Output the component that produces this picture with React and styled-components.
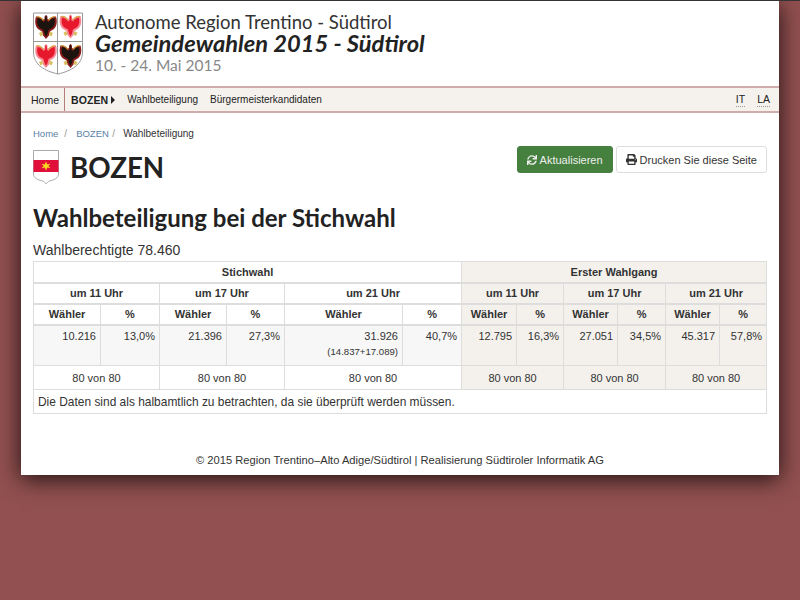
import React from "react";
import styled, { createGlobalStyle } from "styled-components";
import { FaSync, FaPrint } from "react-icons/fa";

const Global = createGlobalStyle`
  html, body {
    margin: 0;
    padding: 0;
  }
  body {
    background: #925050;
    min-height: 600px;
    border-top: 1px solid #333;
    box-sizing: border-box;
    font-family: "Liberation Sans", Arial, sans-serif;
    font-size: 12px;
    color: #333;
  }
`;

const Page = styled.div`
  width: 758px;
  height: 474px;
  margin: 0 auto;
  background: #fff;
  box-shadow: 0 4px 22px rgba(0, 0, 0, 0.8);
  display: flex;
  flex-direction: column;
`;

const Header = styled.header`
  height: 85px;
  padding: 11px 0 0 12px;
  box-sizing: border-box;
  display: flex;
  gap: 12px;
`;

const Titles = styled.div`
  font-family: Lato, sans-serif;
  display: flex;
  flex-direction: column;
`;

const Region = styled.div`
  font-size: 18.5px;
  line-height: 20px;
  color: #333;
`;

const Election = styled.div`
  font-size: 23.7px;
  line-height: 23px;
  font-weight: 700;
  font-style: italic;
  color: #222;
`;

const Dates = styled.div`
  font-size: 15.5px;
  line-height: 21px;
  color: #888;
`;

const Nav = styled.nav`
  height: 27px;
  box-sizing: border-box;
  background: #f5f2ee;
  border-top: 2px solid #cfabab;
  border-bottom: 2px solid #cfabab;
  display: flex;
  align-items: stretch;
  font-size: 10px;
  color: #222;
`;

const NavItem = styled.div`
  display: flex;
  align-items: center;
  padding: 0 6px;
  ${(p) => p.$first && "padding: 0 5px 0 10px; font-size: 10.5px; border-right: 1px solid #b57c7c;"}
  ${(p) => p.$bold && "font-weight: 700; font-size: 10.5px; letter-spacing: 0.1px;"}
`;

const Caret = styled.span`
  width: 0;
  height: 0;
  margin-left: 3px;
  border-left: 4px solid #222;
  border-top: 4px solid transparent;
  border-bottom: 4px solid transparent;
`;

const Langs = styled.div`
  margin-left: auto;
  display: flex;
  align-items: center;
  gap: 12px;
  padding-right: 9px;
  font-size: 10.5px;
`;

const Lang = styled.abbr`
  border-bottom: 1px dotted #999;
  line-height: 13px;
`;

const Main = styled.main`
  padding: 0 12px;
  flex: 1;
  display: flex;
  flex-direction: column;
`;

const Crumbs = styled.div`
  display: flex;
  align-items: baseline;
  margin-top: 14px;
  font-size: 10px;
  line-height: 14px;
  color: #333;
`;

const CrumbLink = styled.span`
  color: #5b7fa6;
  font-size: 9.5px;
`;

const Sep = styled.span`
  color: #999;
  margin: 0 ${(p) => p.$right}px 0 ${(p) => p.$left}px;
`;

const TitleRow = styled.div`
  display: flex;
  justify-content: space-between;
  align-items: flex-start;
  margin-top: 5px;
`;

const City = styled.div`
  display: flex;
  align-items: center;
  gap: 11px;
  padding-top: 4px;
`;

const CityName = styled.h1`
  margin: 0;
  font-family: Lato, sans-serif;
  font-size: 27.7px;
  line-height: 34px;
  font-weight: 700;
  color: #222;
`;

const Buttons = styled.div`
  display: flex;
  gap: 3px;
`;

const Button = styled.div`
  height: 27px;
  box-sizing: border-box;
  padding: 0 9px;
  display: flex;
  align-items: center;
  gap: 3px;
  font-size: 11px;
  border-radius: 3px;
  background: ${(p) => (p.$green ? "#46803f" : "#fff")};
  color: ${(p) => (p.$green ? "#eee" : "#333")};
  border: 1px solid ${(p) => (p.$green ? "#46803f" : "#ddd")};
`;

const Heading = styled.h2`
  margin: 18px 0 0;
  font-family: Lato, sans-serif;
  font-size: 24px;
  line-height: 30px;
  font-weight: 700;
  color: #222;
`;

const Voters = styled.div`
  margin-top: 9px;
  font-size: 14px;
  line-height: 16px;
  color: #333;
`;

const Table = styled.table`
  margin-top: 3px;
  width: 733px;
  table-layout: fixed;
  border-collapse: collapse;
  font-size: 11px;
`;

const Cell = styled.td`
  box-sizing: border-box;
  border: 1px solid #ddd;
  padding: 0 4px;
  height: ${(p) => p.$h}px;
  text-align: ${(p) => p.$align || "center"};
  vertical-align: ${(p) => (p.$top ? "top" : "middle")};
  font-weight: ${(p) => (p.$bold ? 700 : 400)};
  background: ${(p) => p.$bg || "transparent"};
  ${(p) => p.$top && "padding-top: 4px;"}
  ${(p) => p.$thick && "border-bottom-width: 2px;"}
`;

const Note = styled(Cell)`
  font-size: 11.95px;
`;

const Small = styled.div`
  font-size: 9.6px;
  line-height: 14px;
  margin-top: 3px;
`;

const Footer = styled.footer`
  margin-top: 40px;
  text-align: center;
  font-size: 11.17px;
  color: #333;
`;

const BEIGE = "#f4f1ed";
const GREY = "#f7f7f7";

const widths = [67, 59, 67, 58, 118, 59, 55, 47, 54, 48, 54, 47];

const Eagle = ({ x, y, red }) => {
  const body = red ? "#e8182c" : "#1d1410";
  const under = red ? "#f58a94" : "#8a1c1c";
  return (
    <g transform={`translate(${x} ${y})`}>
      <path
        d="M11 0 C9.4 0.6 9.2 2.5 9.6 4 L8.5 4.5 C7 2.5 4.5 1 1 1.5 C-0.5 6 0 11 3 14 L7 16.5 L8 20.5 L11 24 L14 20.5 L15 16.5 L19 14 C22 11 22.5 6 21 1.5 C17.5 1 15 2.5 13.5 4.5 L12.4 4 C12.8 2.5 12.6 0.6 11 0 Z"
        fill={under}
      />
      <path
        d="M11 1 C10 1.5 10 4 10.3 5.5 L8.5 7 C7.5 5 5.5 3.5 2.5 3 C1.6 7 2 10.5 4.5 12.8 L8.5 15 L9.5 19 L11 21.8 L12.5 19 L13.5 15 L17.5 12.8 C20 10.5 20.4 7 19.5 3 C16.5 3.5 14.5 5 13.5 7 L11.7 5.5 C12 4 12 1.5 11 1 Z"
        fill={body}
      />
      <path d="M4 18 L7 16.5 L8 20 L5.5 21.5 Z M18 18 L15 16.5 L14 20 L16.5 21.5 Z" fill="#d8c060" />
      <path
        d="M1.5 2 C4 1.2 7 2.8 8.3 5.5 M20.5 2 C18 1.2 15 2.8 13.7 5.5"
        stroke="#d4ac38"
        strokeWidth="1.1"
        fill="none"
      />
    </g>
  );
};

const RegionArms = () => (
  <svg width="50" height="63" viewBox="0 0 50 63">
    <path
      d="M0.5 1 H49.5 V40 C49.5 53 38 59 25 62 C12 59 0.5 53 0.5 40 Z"
      fill="#fff"
      stroke="#999"
    />
    <path d="M24.5 1 V62 M0.5 29.5 H49.5" stroke="#999" />
    <Eagle x={2} y={3} />
    <Eagle x={26.5} y={2.5} red />
    <Eagle x={2} y={32} red />
    <Eagle x={26.5} y={32} />
  </svg>
);

const CityArms = () => (
  <svg width="26" height="35" viewBox="0 0 26 35">
    <path
      d="M0.5 0.5 H25.5 V24 C25.5 28 21 30 16.5 31 C15 31.5 13.5 33 13 34 C12.5 33 11 31.5 9.5 31 C5 30 0.5 28 0.5 24 Z"
      fill="#fff"
      stroke="#aaa"
    />
    <rect x="0.5" y="10" width="25" height="12" fill="#e0103a" />
    <path
      d="M13 11.5 L14.3 14.4 L17.5 13.7 L15.4 16 L17.5 18.3 L14.3 17.6 L13 20.5 L11.7 17.6 L8.5 18.3 L10.6 16 L8.5 13.7 L11.7 14.4 Z"
      fill="#f8d820"
    />
  </svg>
);

const App = () => {
  const values = [
    "10.216",
    "13,0%",
    "21.396",
    "27,3%",
    "31.926",
    "40,7%",
    "12.795",
    "16,3%",
    "27.051",
    "34,5%",
    "45.317",
    "57,8%",
  ];
  const hours = ["um 11 Uhr", "um 17 Uhr", "um 21 Uhr", "um 11 Uhr", "um 17 Uhr", "um 21 Uhr"];

  return (
    <>
      <Global />
      <Page>
        <Header>
          <RegionArms />
          <Titles>
            <Region>Autonome Region Trentino - Südtirol</Region>
            <Election>Gemeindewahlen 2015 - Südtirol</Election>
            <Dates>10. - 24. Mai 2015</Dates>
          </Titles>
        </Header>
        <Nav>
          <NavItem $first>Home</NavItem>
          <NavItem $bold>
            BOZEN
            <Caret />
          </NavItem>
          <NavItem>Wahlbeteiligung</NavItem>
          <NavItem>Bürgermeisterkandidaten</NavItem>
          <Langs>
            <Lang>IT</Lang>
            <Lang>LA</Lang>
          </Langs>
        </Nav>
        <Main>
          <Crumbs>
            <CrumbLink>Home</CrumbLink>
            <Sep $left={6} $right={9}>/</Sep>
            <CrumbLink>BOZEN</CrumbLink>
            <Sep $left={3.5} $right={8}>/</Sep>
            Wahlbeteiligung
          </Crumbs>
          <TitleRow>
            <City>
              <CityArms />
              <CityName>BOZEN</CityName>
            </City>
            <Buttons>
              <Button $green>
                <FaSync size={10} />
                Aktualisieren
              </Button>
              <Button>
                <FaPrint size={11} />
                Drucken Sie diese Seite
              </Button>
            </Buttons>
          </TitleRow>
          <Heading>Wahlbeteiligung bei der Stichwahl</Heading>
          <Voters>Wahlberechtigte 78.460</Voters>
          <Table>
            <colgroup>
              {widths.map((w, i) => (
                <col key={i} width={w} />
              ))}
            </colgroup>
            <tbody>
              <tr>
                <Cell colSpan={6} $bold $h={21} $thick>Stichwahl</Cell>
                <Cell colSpan={6} $bold $h={21} $thick $bg={BEIGE}>Erster Wahlgang</Cell>
              </tr>
              <tr>
                {hours.map((h, i) => (
                  <Cell key={i} colSpan={2} $bold $h={21} $thick $bg={i > 2 ? BEIGE : undefined}>
                    {h}
                  </Cell>
                ))}
              </tr>
              <tr>
                {widths.map((w, i) => (
                  <Cell key={i} $bold $h={21} $thick $bg={i > 5 ? BEIGE : undefined}>
                    {i % 2 ? "%" : "Wähler"}
                  </Cell>
                ))}
              </tr>
              <tr>
                {values.map((v, i) => (
                  <Cell key={i} $h={41} $top $align="right" $bg={i > 5 ? BEIGE : GREY}>
                    {v}
                    {i === 4 && <Small>(14.837+17.089)</Small>}
                  </Cell>
                ))}
              </tr>
              <tr>
                {hours.map((h, i) => (
                  <Cell key={i} colSpan={2} $h={24} $bg={i > 2 ? BEIGE : undefined}>
                    80 von 80
                  </Cell>
                ))}
              </tr>
              <tr>
                <Note colSpan={12} $h={24} $align="left">
                  Die Daten sind als halbamtlich zu betrachten, da sie überprüft werden müssen.
                </Note>
              </tr>
            </tbody>
          </Table>
          <Footer>© 2015 Region Trentino–Alto Adige/Südtirol | Realisierung Südtiroler Informatik AG</Footer>
        </Main>
      </Page>
    </>
  );
};

export default App;
